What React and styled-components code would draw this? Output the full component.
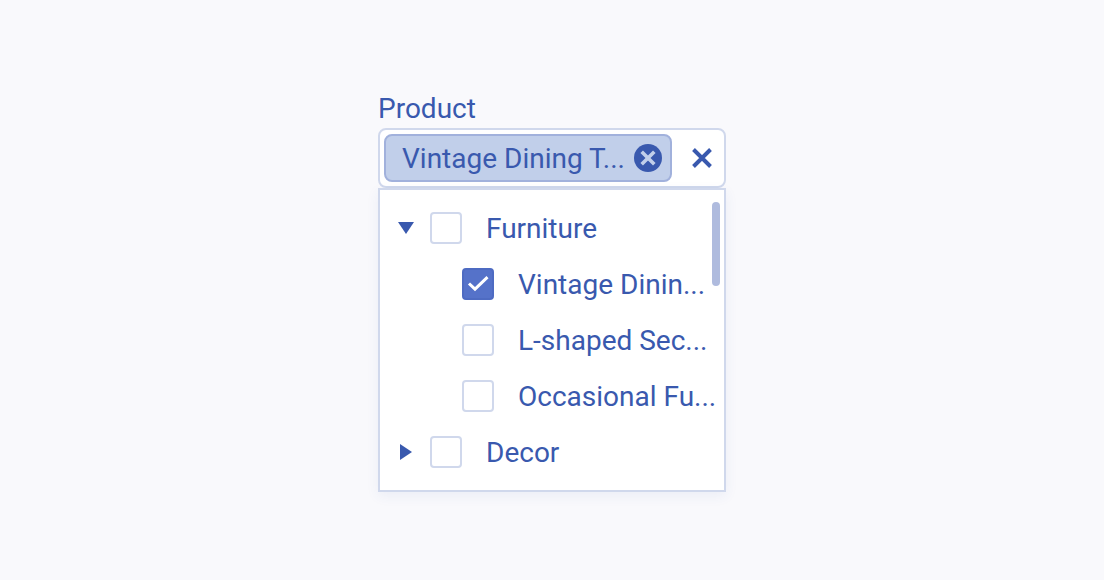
import { useState } from "react"
import styled, { createGlobalStyle } from "styled-components"

const GlobalStyle = createGlobalStyle`
  *{
    box-sizing: border-box;
  }
  body{
    margin: 0;
    background-color: #f9f9fc;
    color: #3959ae;
    font-family: Roboto, "Liberation Sans", sans-serif;
    font-size: 28px;
    line-height: 33px;
  }
`

const categories = [
  {
    id: "furniture",
    label: "Furniture",
    children: [
      { id: "table", label: "Vintage Dinin..." },
      { id: "sofa", label: "L-shaped Sec..." },
      { id: "occasional", label: "Occasional Fu..." },
    ],
  },
  { id: "decor", label: "Decor", children: [] },
]

const Option = ({ item, checked, onChange, children, nested }) => (
  <Row $nested={nested}>
    {children}
    <CheckHolder>
      <CheckInput id={item.id} type="checkbox" checked={checked} onChange={onChange} />
      {checked && (
        <Tick viewBox="0 0 32 32" aria-hidden="true">
          <path d="M7 15.5 L13 21.2 L25.5 9.2" />
        </Tick>
      )}
    </CheckHolder>
    <OptionLabel htmlFor={item.id}>{item.label}</OptionLabel>
  </Row>
)

const App = () => {
  const [selected, setSelected] = useState(["table"]);
  const [open, setOpen] = useState(["furniture"]);

  const toggle = (list, setList, id) => {
    setList(list.includes(id) ? list.filter((x) => x !== id) : [...list, id])
  }

  return (
    <Page>
      <GlobalStyle />
      <Select>
        <Title id="product-label">Product</Title>
        <Field role="group" aria-labelledby="product-label">
          {selected.includes("table") && (
            <Chip>
              <ChipText>Vintage Dining T...</ChipText>
              <IconButton type="button" aria-label="Remove" onClick={() => toggle(selected, setSelected, "table")}>
                <svg width="28" height="28" viewBox="0 0 28 28">
                  <circle cx="14" cy="14" r="14" fill="#3959ae" />
                  <path d="M7.7 7.7 L20.3 20.3 M20.3 7.7 L7.7 20.3" stroke="#c1cfea" strokeWidth="3.6" />
                </svg>
              </IconButton>
            </Chip>
          )}
          <ClearButton type="button" aria-label="Clear all" onClick={() => setSelected([])}>
            <svg width="20" height="20" viewBox="0 0 20 20">
              <path d="M1.5 1.5 L18.5 18.5 M18.5 1.5 L1.5 18.5" stroke="#3959ae" strokeWidth="3.9" />
            </svg>
          </ClearButton>
        </Field>
        <Dropdown>
          <Tree>
            {categories.map((cat) => {
              const isOpen = open.includes(cat.id)
              return (
                <li key={cat.id}>
                  <Option item={cat} checked={selected.includes(cat.id)} onChange={() => toggle(selected, setSelected, cat.id)}>
                    <Expander type="button" aria-label={cat.label} aria-expanded={isOpen} onClick={() => toggle(open, setOpen, cat.id)}>
                      <svg width="16" height="16" viewBox="0 0 16 16">
                        <path d={isOpen ? "M0 2 H16 L8 14 Z" : "M2 0 L14 8 L2 16 Z"} fill="#3959ae" />
                      </svg>
                    </Expander>
                  </Option>
                  {isOpen && cat.children.length > 0 && (
                    <List>
                      {cat.children.map((item) => (
                        <li key={item.id}>
                          <Option nested item={item} checked={selected.includes(item.id)} onChange={() => toggle(selected, setSelected, item.id)} />
                        </li>
                      ))}
                    </List>
                  )}
                </li>
              )
            })}
          </Tree>
          <ScrollThumb />
        </Dropdown>
      </Select>
    </Page>
  )
}

const Page = styled.main`
  min-height: 100vh;
  display: flex;
  justify-content: center;
  align-items: center;
`

const Select = styled.section`
  width: 100%;
  max-width: 348px;
`

const Title = styled.div`
  display: flex;
  align-items: center;
  min-height: 40px;
`

const Field = styled.div`
  display: flex;
  align-items: center;
  padding: 4px;
  min-height: 60px;
  background-color: #fff;
  border: 2px solid #d0d8ec;
  border-radius: 8px;
`

const Chip = styled.div`
  flex: 1;
  min-width: 0;
  display: flex;
  align-items: center;
  justify-content: space-between;
  height: 48px;
  padding: 0 8px 0 16px;
  background-color: #c1cfea;
  border: 2px solid #a1b1dc;
  border-radius: 8px;
`

const ChipText = styled.span`
  white-space: nowrap;
`

const IconButton = styled.button`
  display: flex;
  align-items: center;
  justify-content: center;
  padding: 0;
  border: none;
  background: none;
  cursor: pointer;
`

const ClearButton = styled(IconButton)`
  width: 48px;
  height: 48px;
  margin-left: auto;
  padding-left: 12px;
`

const Dropdown = styled.div`
  position: relative;
  padding: 10px 0;
  background-color: #fff;
  border: 2px solid #d0d8ec;
  box-shadow: 0 4px 12px rgba(55, 87, 172, 0.07);
`

const List = styled.ul`
  margin: 0;
  padding: 0;
  list-style: none;
`

const Tree = styled(List)`
  overflow: hidden;
`

const Row = styled.div`
  display: flex;
  align-items: center;
  height: 56px;
  padding-left: ${(props) => (props.$nested ? "82px" : "18px")};
`

const Expander = styled(IconButton)`
  width: 16px;
  margin-right: 16px;
`

const CheckHolder = styled.span`
  display: grid;
  flex: none;
  width: 32px;
  height: 32px;
  margin-right: 24px;
`

const CheckInput = styled.input`
  appearance: none;
  grid-area: 1 / 1;
  width: 32px;
  height: 32px;
  margin: 0;
  background-color: #fff;
  border: 2px solid #d0d8ec;
  border-radius: 4px;
  cursor: pointer;

  &:checked{
    background-color: #5572c9;
    border-color: #4e6bc2;
  }
`

const Tick = styled.svg`
  grid-area: 1 / 1;
  width: 32px;
  height: 32px;
  fill: none;
  stroke: #fff;
  stroke-width: 3;
  pointer-events: none;
  z-index: 1;
`

const OptionLabel = styled.label`
  white-space: nowrap;
  cursor: pointer;
`

/* floats over the list, like an overlay scrollbar */
const ScrollThumb = styled.div`
  position: absolute;
  top: 12px;
  right: 4px;
  width: 8px;
  height: 84px;
  background-color: #afbbde;
  border-radius: 4px;
`

export default App;
